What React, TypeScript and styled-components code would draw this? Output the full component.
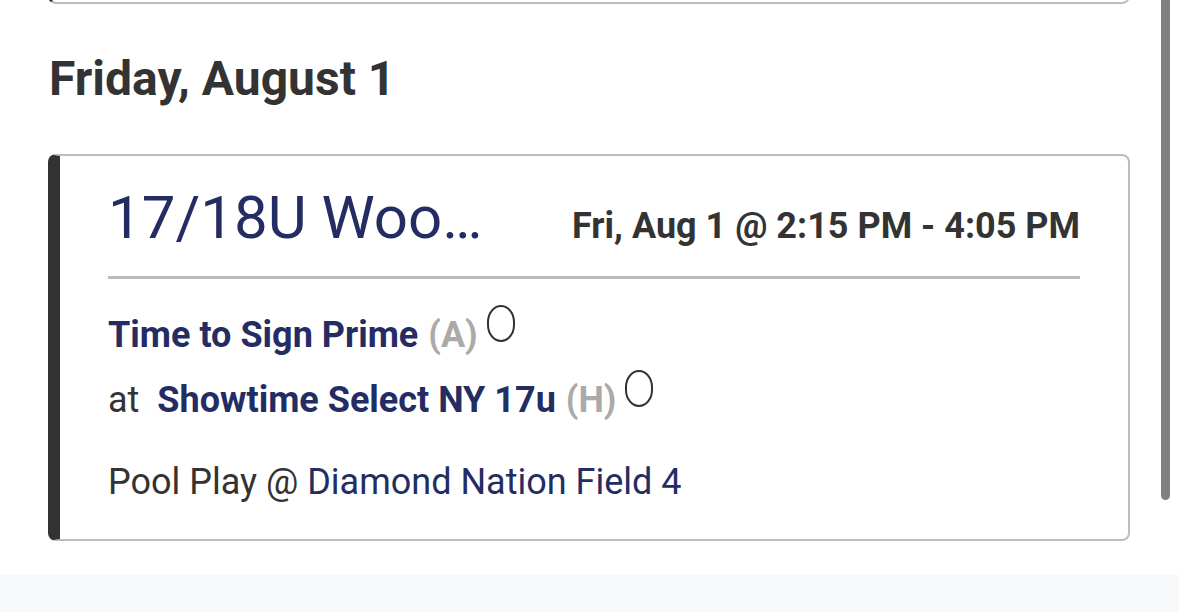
import React from 'react';
import styled, { createGlobalStyle } from 'styled-components';

const GlobalStyle = createGlobalStyle`
  html, body {
    margin: 0;
    padding: 0;
    background: #ffffff;
    font-family: Roboto, "Liberation Sans", sans-serif;
  }
`;

const Page = styled.div`
  position: relative;
  width: 1179px;
  height: 612px;
  overflow: hidden;
  background: #ffffff;
`;

const Content = styled.div`
  display: flow-root;
  padding: 0 49px 0 48px;
  height: 575px;
  box-sizing: border-box;
`;

const PrevCard = styled.div`
  margin-top: -20px;
  height: 20px;
  border: 2px solid #b7bdc1;
  border-left: 3px solid #333333;
  border-radius: 8px;
`;

const DayHeading = styled.h2`
  margin: 47px 0 0 1px;
  font-size: 48px;
  line-height: 56px;
  font-weight: 700;
  color: #333333;
`;

const Card = styled.div`
  margin-top: 47px;
  height: 387px;
  box-sizing: border-box;
  border: 2px solid #b7bdc1;
  border-left: 12px solid #333333;
  border-radius: 8px;
  padding: 28px 48px 0 48px;
`;

const CardHeader = styled.div`
  display: flex;
  align-items: baseline;
  justify-content: space-between;
  padding-bottom: 24px;
  border-bottom: 3px solid #b7bdc1;
`;

const EventTitle = styled.div`
  font-size: 60px;
  line-height: 68px;
  font-weight: 400;
  color: #242d63;
  white-space: nowrap;
`;

const EventTime = styled.div`
  font-size: 36px;
  font-weight: 700;
  color: #333333;
  white-space: nowrap;
`;

const TeamLine = styled.div<{ $gap?: number }>`
  display: flex;
  align-items: baseline;
  margin-top: ${(p) => p.$gap ?? 0}px;
  font-size: 36px;
  line-height: 44px;
  white-space: nowrap;
`;

const AtLabel = styled.span`
  color: #333333;
  font-weight: 400;
  margin-right: 18px;
`;

const TeamName = styled.span`
  color: #242d63;
  font-weight: 700;
`;

const Side = styled.span`
  color: #aaaaaa;
  font-weight: 700;
  margin-left: 10px;
`;

const ScoreOval = styled.span`
  display: inline-block;
  align-self: flex-start;
  width: 28px;
  height: 37px;
  margin: -8px 0 0 9px;
  border: 2.8px solid #333333;
  border-radius: 14px / 17px;
  box-sizing: border-box;
`;

const Location = styled.div`
  margin-top: 38px;
  font-size: 36px;
  line-height: 44px;
  color: #333333;
`;

const FieldName = styled.span`
  color: #242d63;
`;

const Footer = styled.div`
  height: 37px;
  background: #f7f8fa;
`;

const Scrollbar = styled.div`
  position: absolute;
  top: 0;
  right: 9px;
  width: 9px;
  height: 500px;
  background: #808080;
  border-radius: 0 0 5px 5px;
`;

export default function App() {
  return (
    <Page>
      <GlobalStyle />
      <Content>
        <PrevCard />
        <DayHeading>Friday, August 1</DayHeading>
        <Card>
          <CardHeader>
            <EventTitle>17/18U Woo…</EventTitle>
            <EventTime>Fri, Aug 1 @ 2:15 PM - 4:05 PM</EventTime>
          </CardHeader>
          <TeamLine $gap={34}>
            <TeamName>Time to Sign Prime</TeamName>
            <Side>(A)</Side>
            <ScoreOval />
          </TeamLine>
          <TeamLine $gap={21}>
            <AtLabel>at</AtLabel>
            <TeamName>Showtime Select NY 17u</TeamName>
            <Side>(H)</Side>
            <ScoreOval />
          </TeamLine>
          <Location>
            Pool Play @ <FieldName>Diamond Nation Field 4</FieldName>
          </Location>
        </Card>
      </Content>
      <Footer />
      <Scrollbar />
    </Page>
  );
}
